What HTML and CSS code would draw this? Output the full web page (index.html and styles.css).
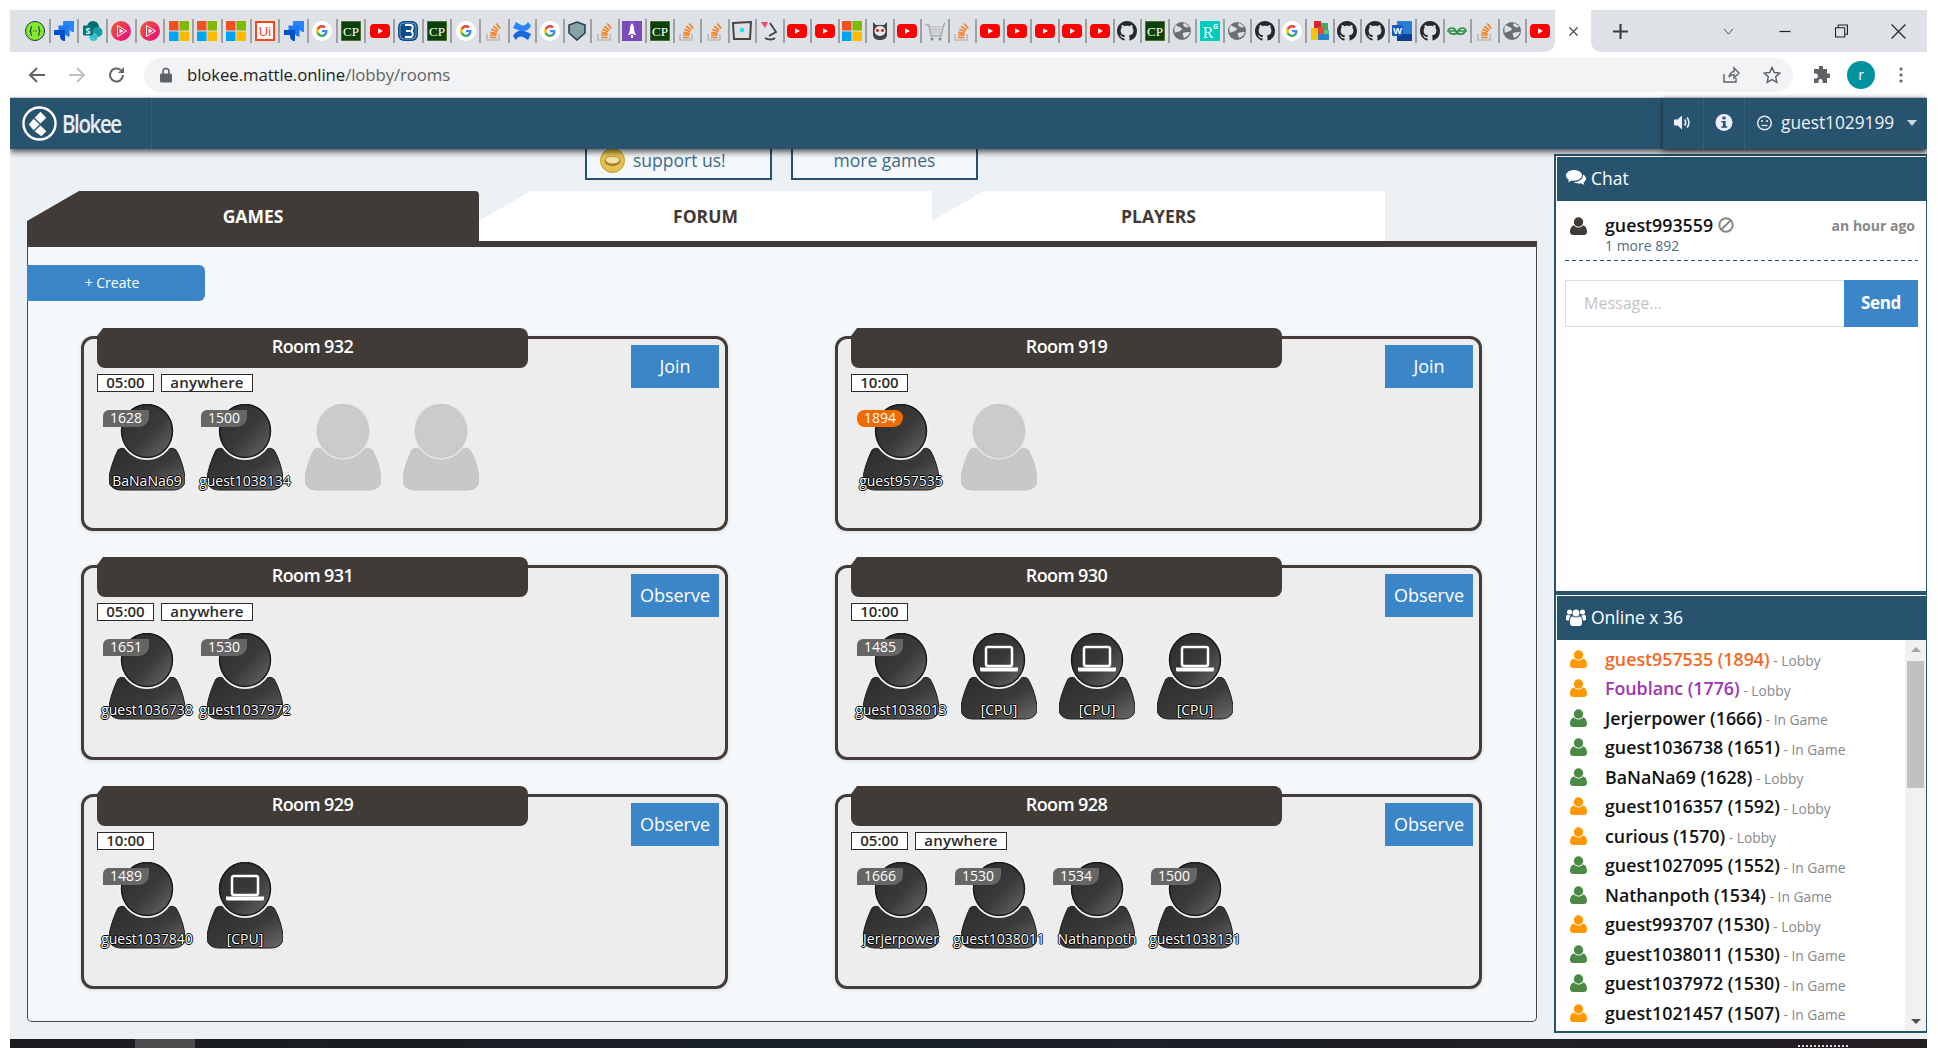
FILE: index.html
```html
<!DOCTYPE html>
<html lang="en">
<head>
<meta charset="utf-8">
<title>Blokee</title>
<link rel="stylesheet" href="styles.css">
</head>
<body>
<svg class="sprite" aria-hidden="true">
  <defs>
    <linearGradient id="darkfill" x1="0" y1="0" x2="1" y2="1"><stop offset="0" stop-color="#2c2c2c"/><stop offset=".55" stop-color="#3a3a3a"/><stop offset="1" stop-color="#6a6a6a"/></linearGradient>
    <linearGradient id="pink" x1="0" y1="0" x2="1" y2="1"><stop offset="0" stop-color="#f15b2a"/><stop offset="1" stop-color="#e80a89"/></linearGradient>
    <symbol id="av" viewBox="0 0 76 87">
      <path d="M9 46C14 42 18 46 24 50C30 55 46 55 52 50C58 46 62 42 67 46C72 54 76 68 76 76C76 83 70 86 64 86L12 86C6 86 0 83 0 76C0 68 5 54 9 46Z" fill="url(#darkfill)" stroke="#1c1c1c"/>
      <ellipse cx="38" cy="27" rx="26" ry="27" fill="url(#darkfill)" stroke="#f4f4f4" stroke-width="4"/>
      <ellipse cx="38" cy="27" rx="25.5" ry="26.5" fill="url(#darkfill)" stroke="#1a1a1a" stroke-width="1.5"/>
    </symbol>
    <symbol id="av-empty" viewBox="0 0 76 87">
      <path d="M9 46C14 42 18 46 24 50C30 55 46 55 52 50C58 46 62 42 67 46C72 54 76 68 76 76C76 83 70 86 64 86L12 86C6 86 0 83 0 76C0 68 5 54 9 46Z" fill="#c8c8c8" stroke="#c2c2c2"/>
      <ellipse cx="38" cy="27" rx="26" ry="27" fill="#cbcbcb" stroke="#e4e4e4" stroke-width="3"/>
      <ellipse cx="38" cy="27" rx="25.5" ry="26.5" fill="#cbcbcb" stroke="#c4c4c4"/>
    </symbol>
    <symbol id="av-cpu" viewBox="0 0 76 87">
      <use href="#av" width="76" height="87"/>
      <rect x="25" y="14" width="26" height="19" rx="2" fill="none" stroke="#fff" stroke-width="2.5"/>
      <path d="M19 34.5H57V37a1.5 1.5 0 0 1-1.5 1.5H20.500A1.500 1.500 0 0 1 19 37Z" fill="#fff"/>
    </symbol>
    <symbol id="i-user" viewBox="0 0 17 18">
      <circle cx="8.500" cy="5" r="4.700"/>
      <path d="M0 15C0 11 2 8.500 4 8.500C5.500 10 7 10.500 8.500 10.500C10 10.500 11.500 10 13 8.500C15 8.500 17 11 17 15C17 17 15.500 18 14 18H3C1.500 18 0 17 0 15Z"/>
    </symbol>
    <symbol id="i-users" viewBox="0 0 20 18">
      <circle cx="10" cy="5" r="3.500"/><circle cx="3.500" cy="4" r="2.500"/><circle cx="16.500" cy="4" r="2.500"/>
      <path d="M4 12C4 9.500 5.500 8.500 7 8.500C8.500 9.800 11.500 9.800 13 8.500C14.500 8.500 16 9.500 16 12V15.500C16 17 15 18 13.500 18H6.500C5 18 4 17 4 15.500Z"/>
      <path d="M0 9C0 7.500 1 6.800 2 6.800C3 7.500 4.200 7.600 5.200 7.200C4.500 8.200 3 9.500 3 12.500H1C.3 12.500 0 12 0 11.300ZM20 9C20 7.500 19 6.800 18 6.800C17 7.500 15.800 7.600 14.800 7.200C15.500 8.200 17 9.500 17 12.500H19C19.700 12.500 20 12 20 11.300Z"/>
    </symbol>
    <symbol id="i-comments" viewBox="0 0 20 16">
      <path d="M8 0C3.600 0 0 2.400 0 5.500C0 7.300 1.200 8.800 3 9.800C2.800 10.600 2.300 11.300 1.800 11.800C3.200 11.700 4.500 11.100 5.400 10.400C6.200 10.600 7.100 10.700 8 10.700C12.400 10.700 16 8.300 16 5.300C16 2.400 12.400 0 8 0Z"/>
      <path d="M17 4.500C18.800 5.400 20 6.900 20 8.500C20 10.200 18.900 11.600 17.400 12.400C17.600 13.200 18.100 14 18.700 14.600C17.300 14.500 16 13.900 15.100 13.200C14.300 13.400 13.400 13.500 12.500 13.500C10.500 13.500 8.700 13 7.400 12.100C12 12 17.300 9.900 17 4.500Z"/>
    </symbol>
    <symbol id="f-swagger" viewBox="0 0 20 20"><circle cx="10" cy="10" r="9.500" fill="#85ea2d" stroke="#173647"/><path d="M7 5.500C5.500 5.500 6 8 5.800 9C5.700 9.700 5 10 4.500 10C5 10 5.700 10.300 5.800 11C6 12 5.500 14.500 7 14.500M13 5.500C14.500 5.500 14 8 14.200 9C14.300 9.700 15 10 15.500 10C15 10 14.300 10.300 14.200 11C14 12 14.500 14.500 13 14.500" fill="none" stroke="#173647" stroke-width="1.100"/><path d="M8 10h.8M9.600 10h.8M11.200 10h.8" stroke="#173647" stroke-width="1.200"/></symbol>
    <symbol id="f-jira" viewBox="0 0 20 20"><path d="M9 0H20V11C17 11 15 9 15 6V5H9Z" fill="#2684ff"/><path d="M4.500 4.500H15.500V15.500C12.500 15.500 10.500 13.500 10.500 10.500V9.500H4.500Z" fill="#1f78f0"/><path d="M0 9H11V20C8 20 6 18 6 15V14H0Z" fill="#0052cc"/></symbol>
    <symbol id="f-share" viewBox="0 0 20 20"><circle cx="10" cy="6" r="6" fill="#036c70"/><circle cx="14.500" cy="11" r="5" fill="#1a9ba1"/><circle cx="10.500" cy="16" r="4" fill="#37c6d0"/><rect x="0" y="4.500" width="10" height="10" rx="1" fill="#03787c"/><text x="5" y="12.500" class="fav-txt fav-s">S</text></symbol>
    <symbol id="f-ps" viewBox="0 0 20 20"><circle cx="10" cy="10" r="10" fill="url(#pink)"/><path d="M6.500 4.500V15.500L15.500 10Z" fill="none" stroke="#fff" stroke-width="1"/><path d="M8.500 7.500V12.500L12.500 10Z" fill="#fff"/></symbol>
    <symbol id="f-ms" viewBox="0 0 20 20"><rect width="9.500" height="9.500" fill="#f25022"/><rect x="10.500" width="9.500" height="9.500" fill="#7fba00"/><rect y="10.500" width="9.500" height="9.500" fill="#00a4ef"/><rect x="10.500" y="10.500" width="9.500" height="9.500" fill="#ffb900"/></symbol>
    <symbol id="f-ui" viewBox="0 0 20 20"><rect x="1" y="1" width="18" height="18" fill="#fff" stroke="#fa4616" stroke-width="2"/><text x="10" y="15" class="fav-txt fav-ui">Ui</text></symbol>
    <symbol id="f-g" viewBox="0 0 20 20"><circle cx="10" cy="10" r="10" fill="#fff"/><path d="M15.500 10.200c0-.4 0-.8-.1-1.200H10v2.300h3.100c-.1.700-.5 1.400-1.200 1.800v1.500h1.900c1.100-1 1.700-2.600 1.700-4.400Z" fill="#4285f4"/><path d="M10 16c1.600 0 2.900-.5 3.800-1.400l-1.900-1.500c-.5.400-1.200.6-1.900.6-1.500 0-2.800-1-3.200-2.400H4.800v1.500C5.800 14.700 7.700 16 10 16Z" fill="#34a853"/><path d="M6.800 11.300c-.2-.8-.2-1.700 0-2.600V7.200H4.800a6 6 0 0 0 0 5.600Z" fill="#fbbc05"/><path d="M10 6.400c.9 0 1.600.3 2.200.9l1.700-1.700C12.800 4.600 11.500 4 10 4 7.700 4 5.800 5.300 4.800 7.200l2 1.500C7.200 7.400 8.500 6.400 10 6.400Z" fill="#ea4335"/></symbol>
    <symbol id="f-cp" viewBox="0 0 20 20"><rect width="20" height="20" fill="#0b4209" stroke="#8a9a5b"/><text x="10" y="14.500" class="fav-txt fav-cp">CP</text></symbol>
    <symbol id="f-yt" viewBox="0 0 20 20"><rect y="3" width="20" height="14" rx="4" fill="#f00"/><path d="M8 7.200V12.800L13 10Z" fill="#fff"/></symbol>
    <symbol id="f-b" viewBox="0 0 20 20"><rect width="20" height="20" rx="6" fill="#0e4c8a"/><rect x="2" y="2" width="16" height="16" rx="4" fill="none" stroke="#8fb4d8" stroke-width=".8"/><path d="M7 4H12.500C15.500 4 15.500 9.500 12.500 10C15.500 10.500 15.500 16 12.500 16H7M8 10H12" fill="none" stroke="#fff" stroke-width="1.800"/></symbol>
    <symbol id="f-stack" viewBox="0 0 20 20"><path d="M3 13V19H15V13" fill="none" stroke="#bcbbbb" stroke-width="1.600"/><path d="M6 16.500H12.500M6 14H12.500M6.300 11.400L12.700 12.700M7.300 8.300L13.300 10.700M9.200 5.200L14.300 9.100M12.200 2.500L16.200 7.500" stroke="#f48024" stroke-width="1.700"/></symbol>
    <symbol id="f-conf" viewBox="0 0 20 20"><path d="M1 15C5 8 11 9 19 13L16 19C10 15 7 14 4 19Z" fill="#1868db"/><path d="M19 5C15 12 9 11 1 7L4 1C10 5 13 6 16 1Z" fill="#2684ff"/></symbol>
    <symbol id="f-shield" viewBox="0 0 20 20"><path d="M10 1L18 4V12L10 19L2 12V4Z" fill="#88a3a6" stroke="#24435a" stroke-width="1.600"/></symbol>
    <symbol id="f-rocket" viewBox="0 0 20 20"><rect width="20" height="20" fill="#7a4ab8"/><path d="M10 2C12.500 5 12.500 9 12 13H8C7.500 9 7.500 5 10 2Z" fill="#fff"/><path d="M8 10L6 14H8ZM12 10L14 14H12ZM9 14H11V17H9Z" fill="#fff"/></symbol>
    <symbol id="f-square" viewBox="0 0 20 20"><path d="M1 2L19 1L18 18L2 18Z" fill="none" stroke="#4a4540" stroke-width="2"/><circle cx="10" cy="9" r="2.200" fill="#1de3ee"/></symbol>
    <symbol id="f-lamp" viewBox="0 0 20 20"><path d="M1 1H8L5 7Z" fill="#ec4868"/><path d="M10 2L16 11L9 15M5 17C8 19 13 19 15 17" fill="none" stroke="#444" stroke-width="1.800"/></symbol>
    <symbol id="f-robot" viewBox="0 0 20 20"><path d="M3 1L6 4H14L17 1V14C17 17 14 19 10 19C6 19 3 17 3 14Z" fill="#444"/><ellipse cx="10" cy="10" rx="5.500" ry="5" fill="#e8e8e8"/><circle cx="7.500" cy="9.500" r="1.400" fill="#c11"/><circle cx="12.500" cy="9.500" r="1.400" fill="#c11"/></symbol>
    <symbol id="f-cart" viewBox="0 0 20 20"><path d="M0 4H4L6 15H16L18 6L20 1" fill="none" stroke="#aaa" stroke-width="1.600"/><path d="M5 6H17M5 8.500H17M5.500 11H16.500M8 5V14M11 5V14M14 5V14" stroke="#bbb" stroke-width=".8"/><circle cx="7" cy="18" r="1.500" fill="#888"/><circle cx="15" cy="18" r="1.500" fill="#888"/></symbol>
    <symbol id="f-gh" viewBox="0 0 16 16"><path fill="#24292e" d="M8 0C3.580 0 0 3.580 0 8c0 3.540 2.290 6.530 5.470 7.590.4.070.55-.17.55-.38 0-.19-.01-.82-.01-1.490-2.010.37-2.530-.49-2.690-.94-.09-.23-.48-.94-.82-1.130-.28-.15-.68-.52-.01-.53.63-.01 1.080.58 1.230.82.72 1.210 1.870.87 2.330.66.070-.52.28-.87.51-1.070-1.780-.2-3.640-.89-3.640-3.950 0-.87.31-1.590.82-2.150-.08-.2-.36-1.020.08-2.120 0 0 .67-.21 2.200.82.64-.18 1.320-.27 2-.27.68 0 1.360.09 2 .27 1.530-1.040 2.200-.82 2.200-.82.44 1.100.16 1.920.08 2.120.51.56.82 1.270.82 2.150 0 3.070-1.870 3.750-3.650 3.950.29.25.54.73.54 1.480 0 1.070-.01 1.930-.01 2.200 0 .21.15.46.55.38A8.013 8.013 0 0016 8c0-4.420-3.580-8-8-8z"/></symbol>
    <symbol id="f-globe" viewBox="0 0 20 20"><circle cx="10" cy="10" r="9" fill="#6b6f73"/><path d="M4 4C6 6 9 6 10 8C9 11 5 10 3 12C2 9 2 6 4 4ZM12 2C14 3 16 4 17 6C15 7 12 6 11 4ZM11 12C13 11 16 11 18 11C17 14 15 16 12 17C12 15 10 14 11 12Z" fill="#dee1e6"/></symbol>
    <symbol id="f-rg" viewBox="0 0 20 20"><rect width="20" height="20" rx="1" fill="#00ccbb"/><text x="8" y="16.500" class="fav-txt fav-r">R</text><text x="15.500" y="8" class="fav-txt fav-g">G</text></symbol>
    <symbol id="f-blocks" viewBox="0 0 20 20"><rect x="4" y="0" width="7" height="7" fill="#d6222a"/><rect x="11" y="2" width="7" height="7" fill="#41a85f"/><rect x="1" y="7" width="7" height="12" fill="#f1c40f"/><rect x="8" y="6" width="6" height="7" fill="#e8473f"/><rect x="8" y="13" width="11" height="6" fill="#2c82c9"/><rect x="14" y="9" width="5" height="4" fill="#58c77c"/></symbol>
    <symbol id="f-word" viewBox="0 0 20 20"><rect x="5" y="0" width="15" height="20" rx="1" fill="#2b7cd3"/><rect x="5" y="13" width="15" height="7" fill="#103f91"/><rect x="0" y="4" width="11" height="11" rx="1" fill="#185abd"/><text x="5.500" y="13" class="fav-txt fav-w">W</text></symbol>
    <symbol id="f-gfg" viewBox="0 0 20 20"><path d="M9 10H1C2 6 7 6 9 10C10 14 16 14 18 11M11 10H19C18 6 13 6 11 10C10 14 4 14 2 11" fill="none" stroke="#2f8d46" stroke-width="1.700"/></symbol>
  </defs>
</svg>

<div class="window">
  <div class="tabstrip">
    <div class="tabs-left">
      <span class="t w"><svg class="fav"><use href="#f-swagger"/></svg></span>
      <span class="t w"><svg class="fav"><use href="#f-jira"/></svg></span>
      <span class="t w"><svg class="fav"><use href="#f-share"/></svg></span>
      <span class="t w"><svg class="fav"><use href="#f-ps"/></svg></span>
      <span class="t w"><svg class="fav"><use href="#f-ps"/></svg></span>
      <span class="t w"><svg class="fav"><use href="#f-ms"/></svg></span>
      <span class="t w"><svg class="fav"><use href="#f-ms"/></svg></span>
      <span class="t w"><svg class="fav"><use href="#f-ms"/></svg></span>
      <span class="t w"><svg class="fav"><use href="#f-ui"/></svg></span>
      <span class="t w"><svg class="fav"><use href="#f-jira"/></svg></span>
      <span class="t w"><svg class="fav"><use href="#f-g"/></svg></span>
      <span class="t w"><svg class="fav"><use href="#f-cp"/></svg></span>
      <span class="t w"><svg class="fav"><use href="#f-yt"/></svg></span>
      <span class="t w"><svg class="fav"><use href="#f-b"/></svg></span>
      <span class="t w"><svg class="fav"><use href="#f-cp"/></svg></span>
      <span class="t w"><svg class="fav"><use href="#f-g"/></svg></span>
      <span class="t w"><svg class="fav"><use href="#f-stack"/></svg></span>
      <span class="t"><svg class="fav"><use href="#f-conf"/></svg></span>
      <span class="t"><svg class="fav"><use href="#f-g"/></svg></span>
      <span class="t"><svg class="fav"><use href="#f-shield"/></svg></span>
      <span class="t"><svg class="fav"><use href="#f-stack"/></svg></span>
      <span class="t"><svg class="fav"><use href="#f-rocket"/></svg></span>
      <span class="t"><svg class="fav"><use href="#f-cp"/></svg></span>
      <span class="t"><svg class="fav"><use href="#f-stack"/></svg></span>
      <span class="t"><svg class="fav"><use href="#f-stack"/></svg></span>
      <span class="t"><svg class="fav"><use href="#f-square"/></svg></span>
      <span class="t"><svg class="fav"><use href="#f-lamp"/></svg></span>
      <span class="t"><svg class="fav"><use href="#f-yt"/></svg></span>
      <span class="t"><svg class="fav"><use href="#f-yt"/></svg></span>
      <span class="t"><svg class="fav"><use href="#f-ms"/></svg></span>
      <span class="t"><svg class="fav"><use href="#f-robot"/></svg></span>
      <span class="t"><svg class="fav"><use href="#f-yt"/></svg></span>
      <span class="t"><svg class="fav"><use href="#f-cart"/></svg></span>
      <span class="t"><svg class="fav"><use href="#f-stack"/></svg></span>
      <span class="t"><svg class="fav"><use href="#f-yt"/></svg></span>
      <span class="t"><svg class="fav"><use href="#f-yt"/></svg></span>
      <span class="t"><svg class="fav"><use href="#f-yt"/></svg></span>
      <span class="t"><svg class="fav"><use href="#f-yt"/></svg></span>
      <span class="t"><svg class="fav"><use href="#f-yt"/></svg></span>
      <span class="t"><svg class="fav"><use href="#f-gh"/></svg></span>
      <span class="t"><svg class="fav"><use href="#f-cp"/></svg></span>
      <span class="t"><svg class="fav"><use href="#f-globe"/></svg></span>
      <span class="t"><svg class="fav"><use href="#f-rg"/></svg></span>
      <span class="t"><svg class="fav"><use href="#f-globe"/></svg></span>
      <span class="t"><svg class="fav"><use href="#f-gh"/></svg></span>
      <span class="t"><svg class="fav"><use href="#f-g"/></svg></span>
      <span class="t"><svg class="fav"><use href="#f-blocks"/></svg></span>
      <span class="t"><svg class="fav"><use href="#f-gh"/></svg></span>
      <span class="t"><svg class="fav"><use href="#f-gh"/></svg></span>
      <span class="t"><svg class="fav"><use href="#f-word"/></svg></span>
      <span class="t"><svg class="fav"><use href="#f-gh"/></svg></span>
      <span class="t"><svg class="fav"><use href="#f-gfg"/></svg></span>
      <span class="t"><svg class="fav"><use href="#f-stack"/></svg></span>
      <span class="t"><svg class="fav"><use href="#f-globe"/></svg></span>
      <span class="t last"><svg class="fav"><use href="#f-yt"/></svg></span>
    </div>
    <div class="tab-active">
      <svg class="win-ico" viewBox="0 0 12 12"><path d="M1.500 1.500L10.500 10.500M10.500 1.500L1.500 10.500" stroke="#3c4043" stroke-width="1.500"/></svg>
    </div>
    <div class="tabs-right">
      <svg class="newtab" viewBox="0 0 14 14"><path d="M7 0V14M0 7H14" stroke="#3c4043" stroke-width="2"/></svg>
      <svg class="win-ico chev" viewBox="0 0 12 8"><path d="M1 1L6 7L11 1" fill="none" stroke="#3c4043" stroke-width="1"/></svg>
      <svg class="win-ico min" viewBox="0 0 12 12"><path d="M0 6H12" stroke="#222" stroke-width="1.300"/></svg>
      <svg class="win-ico rest" viewBox="0 0 12 12"><path d="M3 2.500V.500H11.500V9H9.500M.500 3H9V11.500H.500Z" fill="none" stroke="#222"/></svg>
      <svg class="win-ico cls" viewBox="0 0 14 14"><path d="M.5 .5L13.500 13.500M13.500 .5L.5 13.500" stroke="#222" stroke-width="1.100"/></svg>
    </div>
  </div>

  <div class="toolbar">
    <svg class="nav" viewBox="0 0 18 18"><path d="M17 9H2M9 2L2 9L9 16" fill="none" stroke="#5f6368" stroke-width="2"/></svg>
    <svg class="nav" viewBox="0 0 18 18"><path d="M1 9H16M9 2L16 9L9 16" fill="none" stroke="#bdc1c6" stroke-width="2"/></svg>
    <svg class="nav" viewBox="0 0 18 18"><path d="M15 9A6.500 6.500 0 1 1 12.800 4.100" fill="none" stroke="#5f6368" stroke-width="2"/><path d="M16 1V7H10Z" fill="#5f6368"/></svg>
    <div class="omnibox">
      <svg class="lock" viewBox="0 0 12 16"><path d="M3 7V4.500a3 3 0 0 1 6 0V7" fill="none" stroke="#5f6368" stroke-width="1.600"/><rect y="6.500" width="12" height="9" rx="1.500" fill="#5f6368"/></svg>
      <span class="url">blokee.mattle.online<span class="url-path">/lobby/rooms</span></span>
      <svg class="omni-ico share-ico" viewBox="0 0 18 18"><path d="M2 8V16H14V12M7 11C7.500 7.500 10 5.500 12 5.500V2L17 7L12 12V8.500C10 8.500 8 9.500 7 11Z" fill="none" stroke="#5f6368" stroke-width="1.400"/></svg>
      <svg class="omni-ico" viewBox="0 0 18 18"><path d="M9 1.500L11.300 6.500L16.800 7.100L12.700 10.800L13.800 16.300L9 13.500L4.200 16.300L5.300 10.800L1.200 7.100L6.700 6.500Z" fill="none" stroke="#5f6368" stroke-width="1.500"/></svg>
    </div>
    <svg class="ext" viewBox="0 0 18 18"><path d="M7 1a2 2 0 0 1 4 0V3H15V7.500H17a2.200 2.200 0 0 1 0 4.500H15V17H10.500V15a2 2 0 0 0-4 0V17H2V12.500H3.500a2.500 2.500 0 0 0 0-5H2V3H7Z" fill="#5f6368"/></svg>
    <span class="profile">r</span>
    <svg class="kebab" viewBox="0 0 4 16"><circle cx="2" cy="2" r="1.600" fill="#5f6368"/><circle cx="2" cy="8" r="1.600" fill="#5f6368"/><circle cx="2" cy="14" r="1.600" fill="#5f6368"/></svg>
  </div>

  <header class="appbar">
    <div class="brand">
      <svg class="logo" viewBox="0 0 36 36"><circle cx="18" cy="18" r="16.500" fill="none" stroke="#fff" stroke-width="2.500"/><path d="M19 6L25 12L19 18L13 12ZM12 13L18 19L12 25L7 19ZM19 20L25 26L20 31L13 26Z" fill="#fff"/><path d="M26 13L31 18L26 24L21 18Z" fill="#28536f"/></svg>
      <span class="brand-name">Blokee</span>
    </div>
    <div class="appbar-right">
      <div class="ab-item"><svg class="ab-ico" viewBox="0 0 18 16"><path d="M0 5H3.500L8 1V15L3.500 11H0Z" fill="#eef"/><path d="M10.500 5C12 6.500 12 9.500 10.500 11M13 3C15.500 5.500 15.500 10.500 13 13" fill="none" stroke="#eef" stroke-width="1.700"/></svg></div>
      <div class="ab-item"><svg class="ab-ico" viewBox="0 0 16 16"><circle cx="8" cy="8" r="8" fill="#eef"/><rect x="6.500" y="2.500" width="3" height="2.500" fill="#28536f"/><path d="M5.500 6.500H9.500V11.500H11V13H5.500V11.500H7V8H5.500Z" fill="#28536f"/></svg></div>
      <div class="ab-user">
        <svg class="ab-ico smile" viewBox="0 0 16 16"><circle cx="8" cy="8" r="6.800" fill="none" stroke="#dfe6ec" stroke-width="1.500"/><circle cx="5.500" cy="6" r="1.100" fill="#dfe6ec"/><circle cx="10.500" cy="6" r="1.100" fill="#dfe6ec"/><path d="M5 10.500H11" stroke="#dfe6ec" stroke-width="1.300"/></svg>
        <span class="ab-name">guest1029199</span>
        <span class="caret"></span>
      </div>
    </div>
  </header>

  <main class="main">
    <section class="lobby">
      <div class="promos">
        <a class="promo">
          <svg class="coin" viewBox="0 0 25 25"><circle cx="12.500" cy="12.500" r="12" fill="#e7c24a" stroke="#c09a2c"/><ellipse cx="12.500" cy="13" rx="8" ry="5" fill="#9b7a3a"/><ellipse cx="12.500" cy="12" rx="7" ry="3.500" fill="#f3e1a5"/></svg>
          support us!
        </a>
        <a class="promo promo-center">more games</a>
      </div>
      <nav class="tabs">
        <a class="tab tab-on">GAMES</a>
        <a class="tab">FORUM</a>
        <a class="tab">PLAYERS</a>
      </nav>
      <div class="games">
        <button class="create">+ Create</button>
        <div class="rooms">

          <article class="room">
            <div class="room-body">
              <h2 class="room-title">Room 932</h2>
              <div class="tags"><span class="tag">05:00</span><span class="tag tag-wide">anywhere</span></div>
              <div class="players">
                <div class="player"><svg class="av"><use href="#av"/></svg><span class="elo">1628</span><span class="pname">BaNaNa69</span></div>
                <div class="player"><svg class="av"><use href="#av"/></svg><span class="elo">1500</span><span class="pname">guest1038134</span></div>
                <div class="player"><svg class="av"><use href="#av-empty"/></svg></div>
                <div class="player"><svg class="av"><use href="#av-empty"/></svg></div>
              </div>
            </div>
            <button class="room-btn">Join</button>
          </article>

          <article class="room">
            <div class="room-body">
              <h2 class="room-title">Room 919</h2>
              <div class="tags"><span class="tag">10:00</span></div>
              <div class="players">
                <div class="player"><svg class="av"><use href="#av"/></svg><span class="elo elo-top">1894</span><span class="pname">guest957535</span></div>
                <div class="player"><svg class="av"><use href="#av-empty"/></svg></div>
              </div>
            </div>
            <button class="room-btn">Join</button>
          </article>

          <article class="room">
            <div class="room-body">
              <h2 class="room-title">Room 931</h2>
              <div class="tags"><span class="tag">05:00</span><span class="tag tag-wide">anywhere</span></div>
              <div class="players">
                <div class="player"><svg class="av"><use href="#av"/></svg><span class="elo">1651</span><span class="pname">guest1036738</span></div>
                <div class="player"><svg class="av"><use href="#av"/></svg><span class="elo">1530</span><span class="pname">guest1037972</span></div>
              </div>
            </div>
            <button class="room-btn">Observe</button>
          </article>

          <article class="room">
            <div class="room-body">
              <h2 class="room-title">Room 930</h2>
              <div class="tags"><span class="tag">10:00</span></div>
              <div class="players">
                <div class="player"><svg class="av"><use href="#av"/></svg><span class="elo">1485</span><span class="pname">guest1038013</span></div>
                <div class="player"><svg class="av"><use href="#av-cpu"/></svg><span class="pname">[CPU]</span></div>
                <div class="player"><svg class="av"><use href="#av-cpu"/></svg><span class="pname">[CPU]</span></div>
                <div class="player"><svg class="av"><use href="#av-cpu"/></svg><span class="pname">[CPU]</span></div>
              </div>
            </div>
            <button class="room-btn">Observe</button>
          </article>

          <article class="room">
            <div class="room-body">
              <h2 class="room-title">Room 929</h2>
              <div class="tags"><span class="tag">10:00</span></div>
              <div class="players">
                <div class="player"><svg class="av"><use href="#av"/></svg><span class="elo">1489</span><span class="pname">guest1037840</span></div>
                <div class="player"><svg class="av"><use href="#av-cpu"/></svg><span class="pname">[CPU]</span></div>
              </div>
            </div>
            <button class="room-btn">Observe</button>
          </article>

          <article class="room">
            <div class="room-body">
              <h2 class="room-title">Room 928</h2>
              <div class="tags"><span class="tag">05:00</span><span class="tag tag-wide">anywhere</span></div>
              <div class="players">
                <div class="player"><svg class="av"><use href="#av"/></svg><span class="elo">1666</span><span class="pname">Jerjerpower</span></div>
                <div class="player"><svg class="av"><use href="#av"/></svg><span class="elo">1530</span><span class="pname">guest1038011</span></div>
                <div class="player"><svg class="av"><use href="#av"/></svg><span class="elo">1534</span><span class="pname">Nathanpoth</span></div>
                <div class="player"><svg class="av"><use href="#av"/></svg><span class="elo">1500</span><span class="pname">guest1038131</span></div>
              </div>
            </div>
            <button class="room-btn">Observe</button>
          </article>

        </div>
      </div>
    </section>

    <aside class="side">
      <section class="panel panel-chat">
        <h3 class="panel-head"><svg class="ph-ico"><use href="#i-comments"/></svg>Chat</h3>
        <div class="chat-body">
          <div class="msg">
            <svg class="uico uico-dark"><use href="#i-user"/></svg>
            <div class="msg-main">
              <div class="msg-top">
                <span class="msg-name">guest993559</span>
                <svg class="ban" viewBox="0 0 16 16"><circle cx="8" cy="8" r="6.700" fill="none" stroke="#888" stroke-width="2"/><path d="M3.500 12.500L12.500 3.500" stroke="#888" stroke-width="2"/></svg>
                <span class="msg-time">an hour ago</span>
              </div>
              <div class="msg-text">1 more 892</div>
            </div>
          </div>
          <div class="chat-form">
            <div class="chat-input">Message...</div>
            <button class="send">Send</button>
          </div>
        </div>
      </section>
      <section class="panel panel-online">
        <h3 class="panel-head"><svg class="ph-ico ph-users"><use href="#i-users"/></svg>Online x 36</h3>
        <div class="online-wrap">
          <ul class="online">
            <li><svg class="uico lobby-ic"><use href="#i-user"/></svg><b class="nm nm-orange">guest957535 (1894)</b><span class="st"> - Lobby</span></li>
            <li><svg class="uico lobby-ic"><use href="#i-user"/></svg><b class="nm nm-purple">Foublanc (1776)</b><span class="st"> - Lobby</span></li>
            <li><svg class="uico game-ic"><use href="#i-user"/></svg><b class="nm">Jerjerpower (1666)</b><span class="st"> - In Game</span></li>
            <li><svg class="uico game-ic"><use href="#i-user"/></svg><b class="nm">guest1036738 (1651)</b><span class="st"> - In Game</span></li>
            <li><svg class="uico game-ic"><use href="#i-user"/></svg><b class="nm">BaNaNa69 (1628)</b><span class="st"> - Lobby</span></li>
            <li><svg class="uico lobby-ic"><use href="#i-user"/></svg><b class="nm">guest1016357 (1592)</b><span class="st"> - Lobby</span></li>
            <li><svg class="uico lobby-ic"><use href="#i-user"/></svg><b class="nm">curious (1570)</b><span class="st"> - Lobby</span></li>
            <li><svg class="uico game-ic"><use href="#i-user"/></svg><b class="nm">guest1027095 (1552)</b><span class="st"> - In Game</span></li>
            <li><svg class="uico game-ic"><use href="#i-user"/></svg><b class="nm">Nathanpoth (1534)</b><span class="st"> - In Game</span></li>
            <li><svg class="uico lobby-ic"><use href="#i-user"/></svg><b class="nm">guest993707 (1530)</b><span class="st"> - Lobby</span></li>
            <li><svg class="uico game-ic"><use href="#i-user"/></svg><b class="nm">guest1038011 (1530)</b><span class="st"> - In Game</span></li>
            <li><svg class="uico game-ic"><use href="#i-user"/></svg><b class="nm">guest1037972 (1530)</b><span class="st"> - In Game</span></li>
            <li><svg class="uico lobby-ic"><use href="#i-user"/></svg><b class="nm">guest1021457 (1507)</b><span class="st"> - In Game</span></li>
          </ul>
          <div class="scrollbar">
            <span class="arrow arrow-up"></span>
            <div class="sb-track"><div class="sb-thumb"></div></div>
            <span class="arrow arrow-down"></span>
          </div>
        </div>
      </section>
    </aside>
  </main>

  <footer class="taskbar"><span class="tb-active"></span><span class="tb-clock"></span></footer>
</div>
</body>
</html>
```
FILE: styles.css
```css
* { box-sizing: border-box; }
html, body { margin: 0; padding: 0; height: 100%; background: #fff; overflow: hidden; }
body { font-family: "Open Sans", "Liberation Sans", sans-serif; color: #222; }
h2, h3, ul { margin: 0; padding: 0; }
ul { list-style: none; }
button { font-family: inherit; border: 0; cursor: pointer; }

.sprite { position: absolute; width: 0; height: 0; overflow: hidden; }
.fav-txt { text-anchor: middle; fill: #fff; font-family: "Open Sans", sans-serif; }
.fav-s { font-size: 9px; font-weight: 700; }
.fav-ui { font-size: 13px; fill: #fa4616; font-family: "Liberation Sans", sans-serif; }
.fav-cp { font-size: 13px; font-family: "Liberation Serif", serif; }
.fav-r { font-size: 16px; font-family: "Liberation Serif", serif; }
.fav-g { font-size: 7px; font-weight: 700; }
.fav-w { font-size: 9px; font-weight: 700; }

.window { margin: 10px 11px 0 10px; height: 1038px; width: 1917px; display: flex; flex-direction: column; overflow: hidden; }

/* browser chrome */
.tabstrip { height: 42px; display: flex; background: #fff; flex: none; }
.tabs-left { width: 1545px; background: #dee1e6; display: flex; align-items: center; padding-left: 12px; border-radius: 0 0 10px 0; }
.t { width: 27.5px; height: 24px; flex: none; display: flex; align-items: center; justify-content: center; border-right: 2px solid #9ea1a6; }
.t.w { width: 28.7px; }
.t.last { border-right: 0; margin-left: -1px; }
.fav { width: 20px; height: 20px; display: block; }
.tab-active { width: 36px; background: #fff; display: flex; align-items: center; justify-content: center; flex: none; }
.tabs-right { flex: 1; background: #dee1e6; border-radius: 0 0 0 10px; display: flex; align-items: center; padding-left: 22px; }
.win-ico { width: 11px; height: 11px; display: block; flex: none; }
.newtab { width: 15px; height: 15px; flex: none; }
.chev { width: 11px; height: 7px; margin-left: 95px; }
.min { margin-left: 45px; width: 12px; }
.rest { margin-left: 44px; width: 13px; height: 16px; }
.cls { margin-left: 43px; width: 15px; height: 15px; }

.toolbar { height: 46px; background: #fff; display: flex; align-items: center; flex: none; padding-left: 18px; border-bottom: 1px solid #dadce0; }
.nav { width: 18px; height: 18px; flex: none; margin-right: 22px; }
.nav:last-of-type { margin-right: 0; }
.omnibox { width: 1649px; margin-left: -4px; height: 34px; background: #f1f3f4; border-radius: 17px; display: flex; align-items: center; padding-left: 16px; flex: none; }
.lock { width: 12px; height: 16px; flex: none; }
.url { margin-left: 15px; font-size: 16.800px; color: #202124; letter-spacing: -.1px; white-space: nowrap; }
.url-path { color: #5f6368; }
.omni-ico { width: 18px; height: 18px; flex: none; margin-left: 23px; }
.share-ico { margin-left: auto; }
.omni-ico:last-child { margin-right: 12px; }
.ext { width: 18px; height: 18px; flex: none; margin-left: 19px; }
.profile { width: 28px; height: 28px; margin-left: 17px; border-radius: 50%; background: #00929e; color: #fff; font-size: 14px; display: flex; align-items: center; justify-content: center; flex: none; }
.kebab { width: 4px; height: 16px; margin-left: 24px; flex: none; }

/* app bar */
.appbar { height: 51px; flex: none; background: #28536f; display: flex; justify-content: space-between; position: relative; z-index: 3; box-shadow: 0 3px 6px rgba(0,0,0,.65); }
.brand { width: 142px; display: flex; align-items: center; padding-left: 12px; border-right: 1px solid #34607c; }
.logo { width: 35px; height: 35px; flex: none; }
.brand-name { color: #e8edf1; font-size: 20.500px; font-weight: 600; margin-left: 5px; letter-spacing: -1.400px; line-height: 1; transform: scaleY(1.200); }
.appbar-right { display: flex; box-shadow: 0 2px 6px rgba(0,0,0,.6); }
.ab-item { width: 41px; display: flex; align-items: center; justify-content: center; border-right: 1px solid #34607c; padding-bottom: 3px; }
.ab-ico { width: 18px; height: 17px; display: block; }
.ab-user { width: 182px; display: flex; align-items: center; padding: 0 0 2px 11px; }
.smile { flex: none; width: 17px; height: 16px; }
.ab-name { color: #eef2f5; font-size: 17.300px; margin-left: 8px; }
.caret { margin-left: 13px; border: 5px solid transparent; border-top: 6px solid #cfd8df; border-bottom: 0; }

/* main */
.main { flex: 1; min-height: 0; display: grid; grid-template-columns: 1544px 373px; background: #ecf1f6; }
.lobby { padding: 0 17px 0 17px; min-width: 0; }
.promos { height: 41px; padding-left: 558px; margin-top: -10px; display: flex; gap: 19px; align-items: flex-start; }
.promo { width: 187px; height: 41px; border: 2px solid #28536f; background: #f4f8fb; display: flex; align-items: flex-end; padding: 0 0 5px 13px; font-size: 17.500px; color: #3e6a87; gap: 8px; line-height: 25px; }
.promo-center { justify-content: center; padding-left: 0; }
.coin { width: 25px; height: 25px; flex: none; }

.tabs { display: flex; margin-top: 11px; height: 50px; }
.tab { width: 453px; background: #fff; font-weight: 700; font-size: 17.500px; color: #3f3a37; display: flex; align-items: center; justify-content: center; padding-bottom: 1px; clip-path: polygon(52px 0, 100% 0, 100% 100%, 0 100%, 0 30px); }
.tab-on { width: 452px; background: #413b37; color: #fff; border-radius: 0 4px 0 0; }

.games { height: 781px; border: 1px solid #4a4542; border-top: 6px solid #413b37; border-radius: 0 0 5px 5px; background: #f4f8fb; padding-top: 18px; }
.create { display: block; width: 178px; height: 36px; margin-left: -1px; padding: 0 8px 2px 0; background: #3b85c9; color: #fff; font-size: 14px; border-radius: 0 6px 6px 0; }
.rooms { display: grid; grid-template-columns: 647px 647px; column-gap: 107px; row-gap: 34px; padding: 35px 0 0 53px; }
.room { height: 195px; background: #ededed; border: 3px solid #433c38; border-radius: 12px; display: flex; justify-content: space-between; align-items: flex-start; box-shadow: 0 1px 4px rgba(0,0,0,.12); }
.room-body { padding-left: 13px; flex: 1; min-width: 0; }
.room-title { width: 431px; height: 40px; margin-top: -11px; background: #413b37; color: #fff; font-size: 18px; font-weight: 600; line-height: 36px; text-align: center; border-radius: 0 8px 8px 8px; letter-spacing: -.6px; clip-path: polygon(6px 0, 100% 0, 100% 100%, 0 100%, 0 8px); }
.tags { display: flex; gap: 7px; margin-top: 6px; }
.tag { width: 57px; height: 18px; border: 1px solid #2e2a28; background: #fff; font-size: 15px; font-weight: 600; color: #2e2a28; line-height: 15px; text-align: center; }
.tag-wide { width: 92px; letter-spacing: .2px; }
.players { display: flex; gap: 22px; margin-top: 12px; padding-left: 12px; }
.player { width: 76px; height: 87px; position: relative; flex: none; }
.av { width: 76px; height: 87px; display: block; }
.elo { position: absolute; left: -6px; top: 6px; width: 46px; height: 17px; padding-left: 7px; background: #666; color: #fff; font-size: 14px; line-height: 16px; border-radius: 6px 0 10px 0; }
.elo-top { background: #f06a00; border-radius: 8px 8px 10px 8px; text-align: center; padding-left: 0; }
.pname { position: absolute; left: 50%; bottom: 1px; transform: translateX(-50%); white-space: nowrap; color: #fff; font-size: 14px; line-height: 19px; text-shadow: 1px 0 0 #000, -1px 0 0 #000, 0 1px 0 #000, 0 -1px 0 #000; }
.room-btn { width: 88px; height: 43px; flex: none; margin: 6px 6px 0 0; background: #3b85c9; color: #fff; font-size: 18px; padding: 0 0 2px; }

/* side */
.side { padding: 5px 0 6px; display: flex; flex-direction: column; min-height: 0; }
.panel { border: 2px solid #28536f; border-right-width: 1px; background: #fff; padding: 1px 0 0 1px; display: flex; flex-direction: column; min-height: 0; }
.panel-chat { height: 439px; flex: none; }
.panel-online { flex: 1; }
.panel-head { height: 44px; flex: none; background: #28536f; color: #fff; font-size: 17.500px; font-weight: 400; display: flex; align-items: center; padding: 0 0 2px 9px; gap: 5px; }
.ph-ico { width: 20px; height: 16px; fill: #fff; flex: none; }
.ph-users { height: 18px; }
.chat-body { padding: 16px 8px 0 8px; }
.msg { display: flex; height: 44px; background: repeating-linear-gradient(90deg, #28536f 0 4px, transparent 4px 7px) bottom / 100% 1px no-repeat; }
.uico { width: 17px; height: 18px; flex: none; display: block; }
.uico-dark { fill: #413b37; margin: 0 18px 0 5px; }
.msg-main { flex: 1; min-width: 0; margin-top: -2px; }
.msg-top { display: flex; align-items: center; height: 20px; }
.msg-name { font-size: 17.800px; font-weight: 600; color: #111; }
.ban { width: 16px; height: 16px; margin-left: 5px; }
.msg-time { margin-left: auto; margin-right: 3px; font-size: 14px; font-weight: 700; color: #888; }
.msg-text { font-size: 14px; line-height: 19px; margin-top: 1px; color: #516a7c; }
.chat-form { display: flex; margin-top: 19px; height: 47px; }
.chat-input { flex: 1; border: 1px solid #ddd; border-right: 0; background: #fff; color: #c4c4c4; font-size: 16px; line-height: 45px; padding-left: 18px; }
.send { width: 74px; background: #3b85c9; color: #fff; font-size: 17px; font-weight: 700; padding: 0 0 2px; letter-spacing: -.3px; }

.online-wrap { flex: 1; display: flex; min-height: 0; }
.online { flex: 1; padding: 5px 0 0 13px; min-width: 0; overflow: hidden; }
.online li { height: 29.500px; display: flex; align-items: center; white-space: pre; }
.online .uico { margin-right: 18px; margin-top: -2px; }
.lobby-ic { fill: #ff9800; }
.game-ic { fill: #4a8a45; }
.nm { font-size: 17.800px; font-weight: 600; color: #111; margin-top: -2px; }
.nm-orange { color: #f3691f; }
.nm-purple { color: #a035b2; }
.st { font-size: 13.800px; color: #888; margin-top: 2px; }

.scrollbar { width: 21px; flex: none; background: #f1f1f1; display: flex; flex-direction: column; align-items: center; padding: 7px 0; }
.sb-track { flex: 1; width: 100%; padding: 9px 2px 0; }
.sb-thumb { height: 127px; background: #c1c1c1; }
.arrow { border-left: 5px solid transparent; border-right: 5px solid transparent; flex: none; }
.arrow-up { border-bottom: 5px solid #a3a3a3; }
.arrow-down { border-top: 5px solid #505050; }

.taskbar { height: 9px; flex: none; background: linear-gradient(90deg, #1b1c1f 0, #1a2129 45%, #231e22 100%); display: flex; padding-left: 125px; position: relative; }
.tb-active { width: 60px; background: #4c4c4e; }
.tb-clock { width: 50px; height: 2px; margin: 6px 0 0 1603px; border-top: 2px dotted #ddd; }
```
